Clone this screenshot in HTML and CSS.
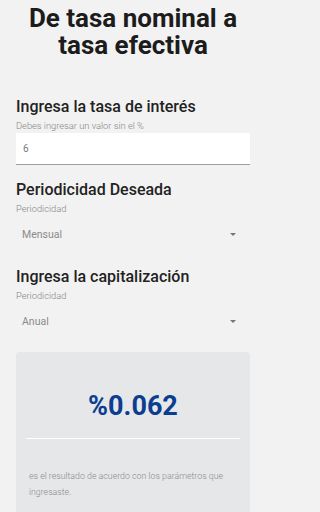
FILE: index.html
```html
<!DOCTYPE html>
<html lang="es">
<head>
<meta charset="utf-8">
<title>De tasa nominal a tasa efectiva</title>
<link rel="stylesheet" href="styles.css">
</head>
<body>
<main class="page">
  <h1 class="title">De tasa nominal a tasa efectiva</h1>

  <section class="field field-first">
    <h2 class="field-title">Ingresa la tasa de interés</h2>
    <div class="field-label">Debes ingresar un valor sin el %</div>
    <div class="input">6</div>
  </section>

  <section class="field">
    <h2 class="field-title">Periodicidad Deseada</h2>
    <div class="field-label">Periodicidad</div>
    <div class="select">
      <span class="select-value">Mensual</span>
      <span class="caret"></span>
    </div>
  </section>

  <section class="field">
    <h2 class="field-title">Ingresa la capitalización</h2>
    <div class="field-label">Periodicidad</div>
    <div class="select">
      <span class="select-value">Anual</span>
      <span class="caret"></span>
    </div>
  </section>

  <section class="result">
    <div class="result-value">%0.062</div>
    <hr class="result-divider">
    <p class="result-text">es el resultado de acuerdo con los parámetros que ingresaste.</p>
  </section>
</main>
</body>
</html>
```

FILE: styles.css
```css
* {
  box-sizing: border-box;
}

html, body {
  margin: 0;
  padding: 0;
  background: #f2f2f2;
}

body {
  font-family: Roboto, "Noto Sans", "Liberation Sans", sans-serif;
  color: #212121;
}

.page {
  width: 266px;
  display: flex;
  flex-direction: column;
  padding: 5px 16px 0;
}

.title {
  margin: 0;
  font-size: 26px;
  line-height: 27px;
  font-weight: 700;
  text-align: center;
  color: #1c1c1c;
}

.field {
  display: flex;
  flex-direction: column;
  margin-top: 15px;
}

.field-first {
  margin-top: 38px;
}

.field-title {
  margin: 0;
  font-size: 16px;
  line-height: 19px;
  font-weight: 500;
  color: #222;
}

.field-label {
  margin-top: 4px;
  font-size: 9.3px;
  line-height: 11px;
  font-weight: 300;
  color: #858585;
}

.input {
  margin-top: 2px;
  height: 32px;
  background: #ffffff;
  border-bottom: 1px solid #9e9e9e;
  padding: 0 7px;
  display: flex;
  align-items: center;
  font-size: 10px;
  color: #7a7a7a;
}

.select {
  margin-top: 2px;
  height: 36px;
  display: flex;
  align-items: center;
  justify-content: space-between;
  padding: 0 14px 0 6px;
}

.select-value {
  font-size: 10.5px;
  color: #8a8a8a;
}

.caret {
  width: 0;
  height: 0;
  border-left: 3px solid transparent;
  border-right: 3px solid transparent;
  border-top: 3px solid #757575;
}

.result {
  margin-top: 13px;
  background: #e6e7e9;
  border-radius: 4px 4px 0 0;
  padding: 38px 10px 14px;
  display: flex;
  flex-direction: column;
}

.result-value {
  font-size: 27px;
  line-height: 32px;
  font-weight: 700;
  text-align: center;
  color: #0b3d91;
}

.result-divider {
  margin: 16px 0 0;
  border: 0;
  height: 1px;
  background: #ffffff;
}

.result-text {
  margin: 29px 0 0;
  padding: 0 3px;
  font-size: 8.8px;
  line-height: 16px;
  font-weight: 300;
  color: #8a8a8a;
}
```
